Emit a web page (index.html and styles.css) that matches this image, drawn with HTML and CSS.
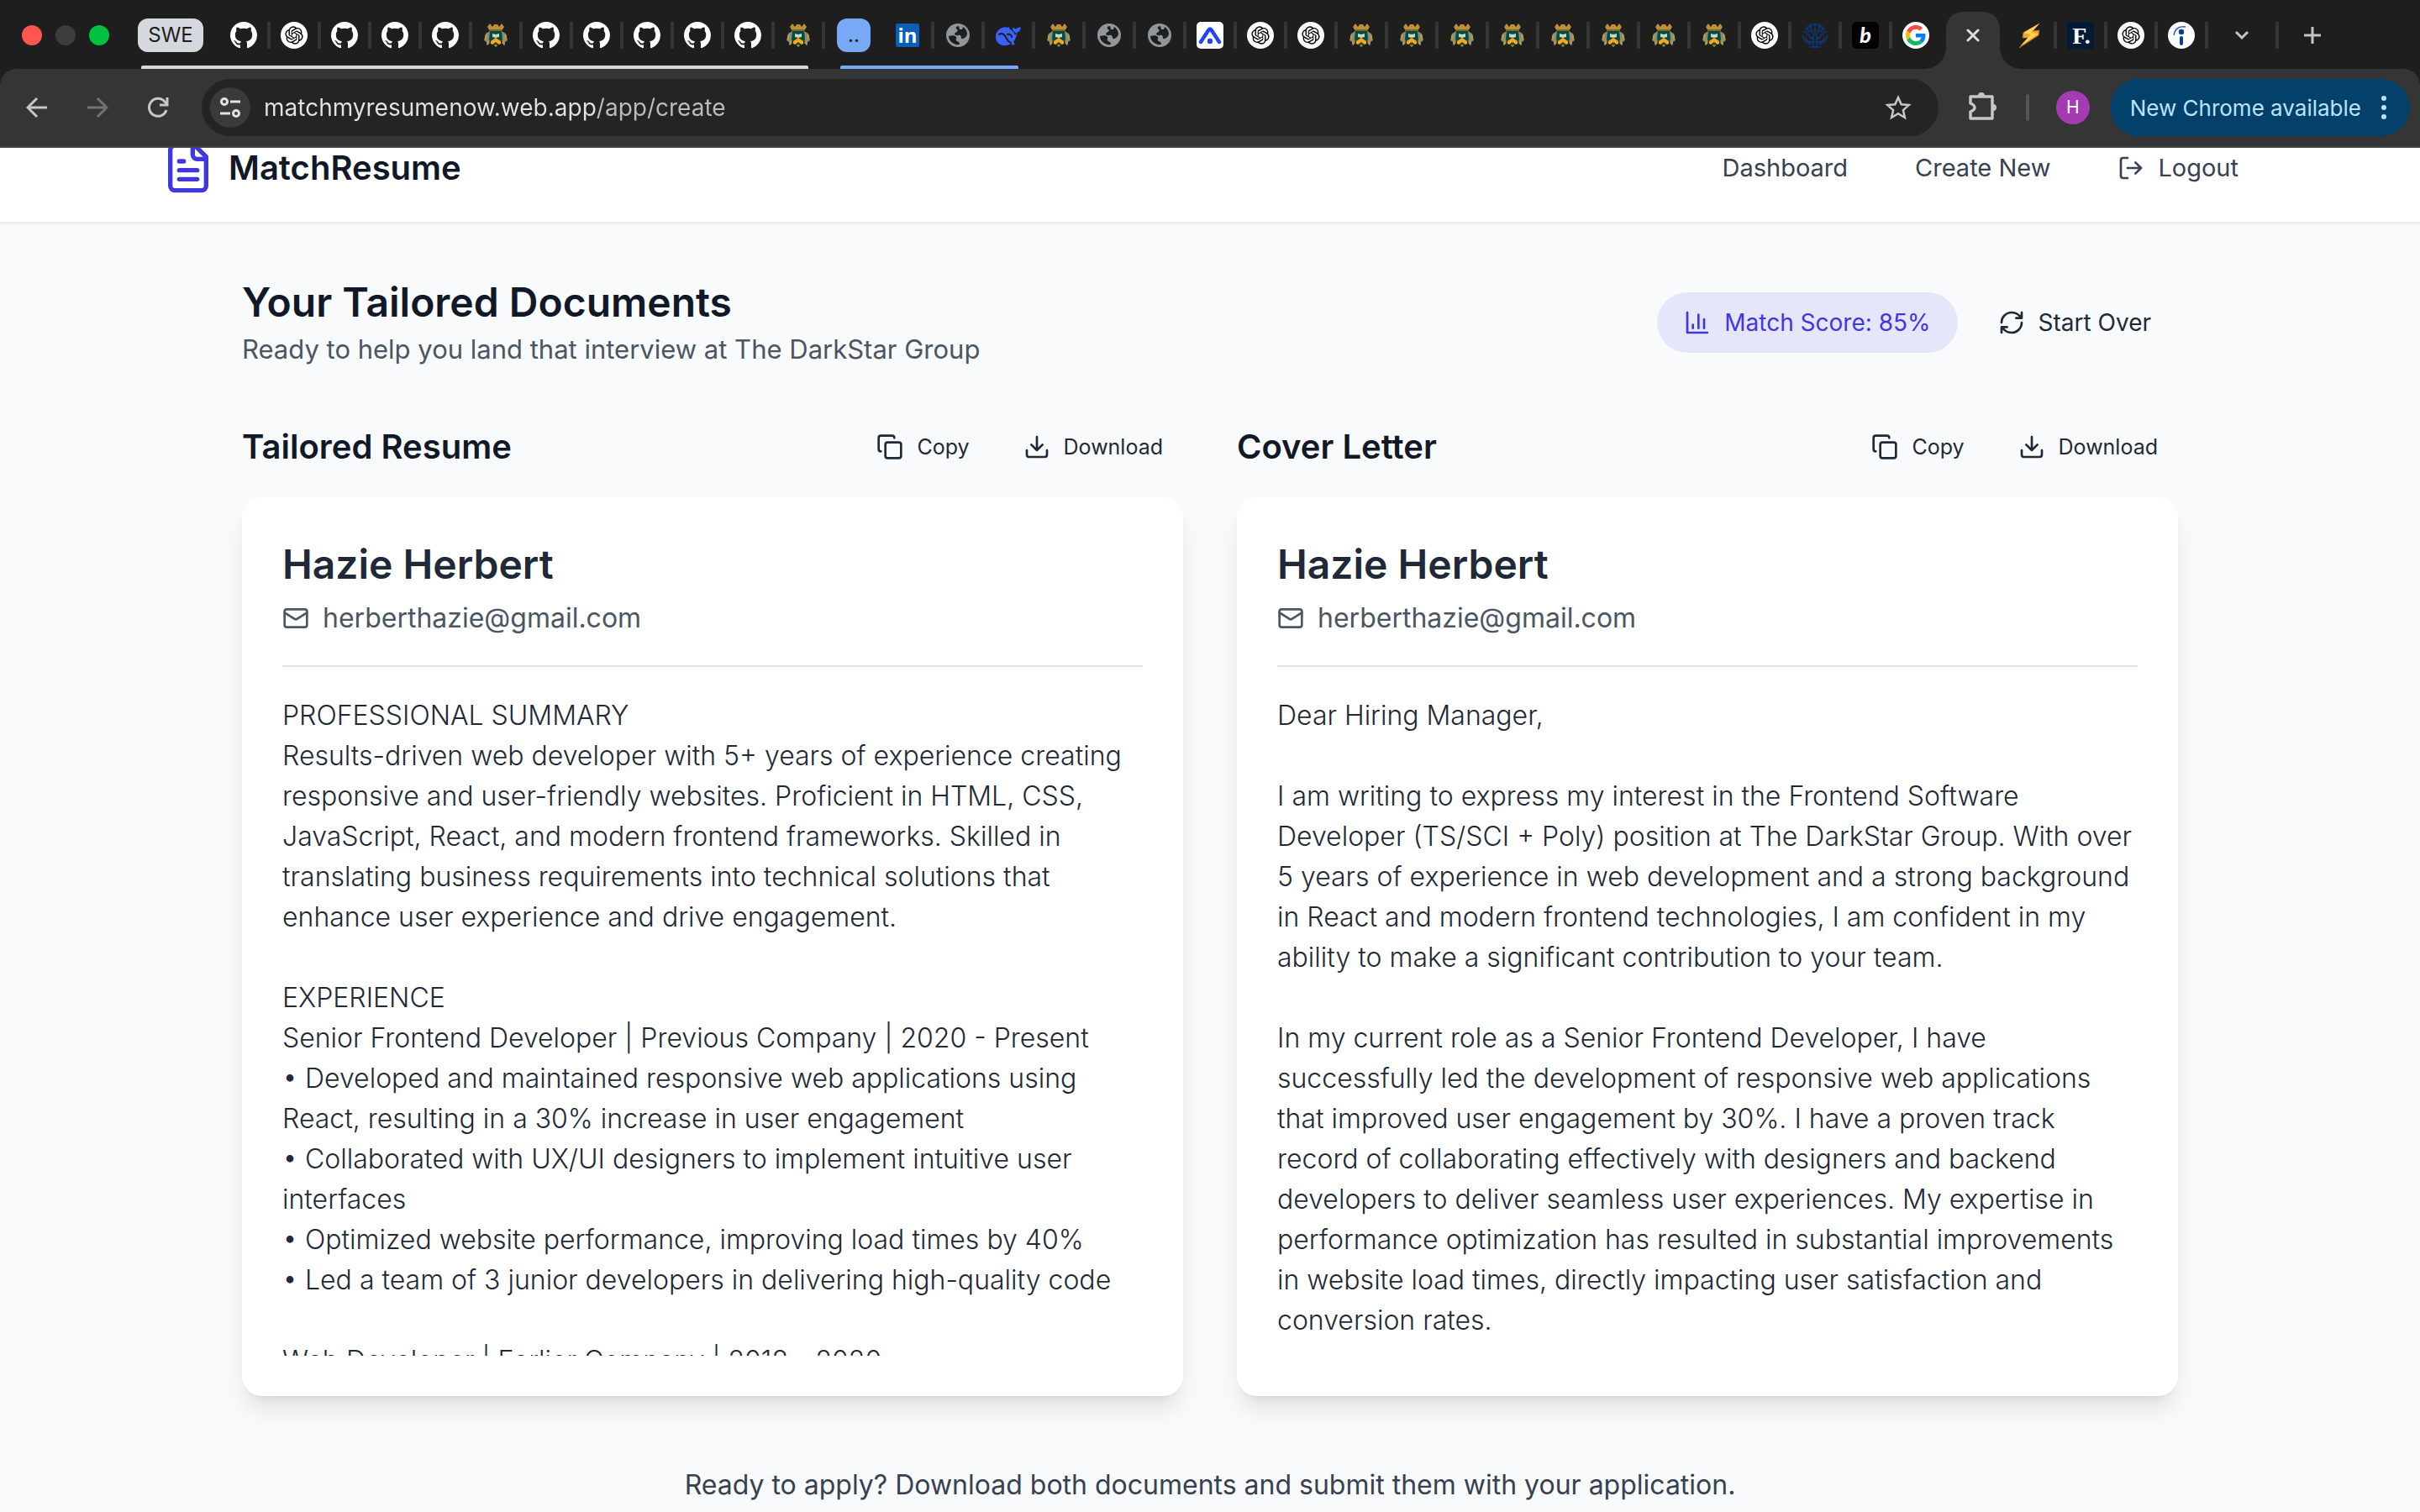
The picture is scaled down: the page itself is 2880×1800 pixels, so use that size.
FILE: index.html
```html
<!DOCTYPE html>
<html lang="en">
<head>
    <meta charset="UTF-8">
    <meta name="viewport" content="width=device-width, initial-scale=1.0">
    <title>MatchResume</title>
    <link rel="stylesheet" href="styles.css">
</head>
<body>
    <!-- Icon sprites -->
    <svg class="sprites" aria-hidden="true">
        <symbol id="github" viewBox="0 0 16 16">
            <path fill="#fff" d="M8 0C3.58 0 0 3.58 0 8c0 3.54 2.29 6.53 5.47 7.59.4.07.55-.17.55-.38 0-.19-.01-.82-.01-1.49-2.01.37-2.53-.49-2.69-.94-.09-.23-.48-.94-.82-1.13-.28-.15-.68-.52-.01-.53.63-.01 1.08.58 1.23.82.72 1.21 1.87.87 2.33.66.07-.52.28-.87.51-1.07-1.78-.2-3.64-.89-3.64-3.95 0-.87.31-1.59.82-2.15-.08-.2-.36-1.02.08-2.12 0 0 .67-.21 2.2.82.64-.18 1.32-.27 2-.27s1.36.09 2 .27c1.53-1.04 2.2-.82 2.2-.82.44 1.1.16 1.92.08 2.12.51.56.82 1.27.82 2.15 0 3.07-1.87 3.75-3.65 3.95.29.25.54.73.54 1.48 0 1.07-.01 1.93-.01 2.2 0 .21.15.46.55.38A8.01 8.01 0 0 0 16 8c0-4.42-3.58-8-8-8z"/>
        </symbol>
        <symbol id="openai" viewBox="0 0 36 36">
            <circle cx="18" cy="18" r="18" fill="#fff"/>
            <path fill="#000" transform="translate(6 6)" d="M22.2819 9.8211a5.9847 5.9847 0 0 0-.5157-4.9108 6.0462 6.0462 0 0 0-6.5098-2.9A6.0651 6.0651 0 0 0 4.9807 4.1818a5.9847 5.9847 0 0 0-3.9977 2.9 6.0462 6.0462 0 0 0 .7427 7.0966 5.98 5.98 0 0 0 .511 4.9107 6.051 6.051 0 0 0 6.5146 2.9001A5.9847 5.9847 0 0 0 13.2599 24a6.0557 6.0557 0 0 0 5.7718-4.2058 5.9894 5.9894 0 0 0 3.9977-2.9001 6.0557 6.0557 0 0 0-.7475-7.0729zm-9.022 12.6081a4.4755 4.4755 0 0 1-2.8764-1.0408l.1419-.0804 4.7783-2.7582a.7948.7948 0 0 0 .3927-.6813v-6.7369l2.02 1.1686a.071.071 0 0 1 .038.052v5.5826a4.504 4.504 0 0 1-4.4945 4.4944zm-9.6607-4.1254a4.4708 4.4708 0 0 1-.5346-3.0137l.142.0852 4.783 2.7582a.7712.7712 0 0 0 .7806 0l5.8428-3.3685v2.3324a.0804.0804 0 0 1-.0332.0615L9.74 19.9502a4.4992 4.4992 0 0 1-6.1408-1.6464zM2.3408 7.8956a4.485 4.485 0 0 1 2.3655-1.9728V11.6a.7664.7664 0 0 0 .3879.6765l5.8144 3.3543-2.0201 1.1685a.0757.0757 0 0 1-.071 0l-4.8303-2.7865A4.504 4.504 0 0 1 2.3408 7.872zm16.5963 3.8558L13.1038 8.364 15.1192 7.2a.0757.0757 0 0 1 .071 0l4.8303 2.7913a4.4944 4.4944 0 0 1-.6765 8.1042v-5.6772a.79.79 0 0 0-.407-.667zm2.0107-3.0231l-.142-.0852-4.7735-2.7818a.7759.7759 0 0 0-.7854 0L9.409 9.2297V6.8974a.0662.0662 0 0 1 .0284-.0615l4.8303-2.7866a4.4992 4.4992 0 0 1 6.6802 4.66zM8.3065 12.863l-2.02-1.1638a.0804.0804 0 0 1-.038-.0567V6.0742a4.4992 4.4992 0 0 1 7.3757-3.4537l-.142.0805L8.704 5.459a.7948.7948 0 0 0-.3927.6813zm1.0976-2.3654l2.602-1.4998 2.6069 1.4998v2.9994l-2.5974 1.4997-2.6067-1.4997Z"/>
        </symbol>
        <symbol id="crest" viewBox="0 0 32 32">
            <path fill="#bf8f32" d="M9 2l3 4 2-3h4l2 3 3-4 3 4-3 5H9L6 6z"/>
            <path fill="#6f6a3c" d="M8 9h16l-1 3H9z"/>
            <path fill="#7f8e80" d="M4 14l5-3 2 5-3 9-3 3v-4l-3-2zM28 14l-5-3-2 5 3 9 3 3v-4l3-2z"/>
            <path fill="#c9952b" d="M3 16l3-1-1 6-2 1zM29 16l-3-1 1 6 2 1zM6 22l3 3-3 3zM26 22l-3 3 3 3z"/>
            <path fill="#0b4a38" d="M9 11h14l1 10-3 5-5 4-5-4-3-5z"/>
            <path fill="#c8d6cc" d="M12 14l4 1 4-1v4l-4 1-4-1z"/>
            <path fill="#ffa41f" d="M10 23l6-4 6 4v3l-2 1-4-3-4 3-2-1z"/>
            <path fill="#b98a2e" d="M14 28l2 2 2-2-2-1z"/>
        </symbol>
        <symbol id="linkedin" viewBox="0 0 32 32">
            <rect x="2" y="2" width="28" height="28" rx="2" fill="#0a5fb8"/>
            <text x="16" y="25" text-anchor="middle" class="mark-in">in</text>
        </symbol>
        <symbol id="globe" viewBox="0 0 32 32">
            <circle cx="16" cy="16" r="14" fill="#8f969c"/>
            <path fill="#1e1e1e" d="M17 5c-4 0-4 3-2 4s0 3-2 4 0 4 3 3 4 1 4 3 3 1 4 0 3-2 3-5A11 11 0 0 0 22 6l-1 3h-3zM5 17c4-1 8-1 9 1s-1 2 0 4 4 1 4 5C11 28 5 23 5 17z"/>
        </symbol>
        <symbol id="whale" viewBox="0 0 32 32">
            <path fill="#3b62f6" d="M9 7c2-1 4-1 6 0l2-1 0 2c4 2 6 5 7 8 1-1 1-2 1-3-3-1-4-3-4-6 2 0 3 1 4 2 1-2 4-3 6-2-1 3-2 5-5 6 0 5-2 8-4 11l2 3c-2 1-4 0-5-1C11 31 1 27 1 18 1 12 5 8 9 7z"/>
            <path fill="none" stroke="#1e1e1e" stroke-width="2" stroke-linecap="round" d="M5 15c4-3 7 1 9 5s4 4 5 5M15 15c3-1 5 1 5 3"/>
        </symbol>
        <symbol id="arch" viewBox="0 0 32 32">
            <rect width="32" height="32" rx="5" fill="#fff"/>
            <path d="M5 24L14.500 9.500q1.500-2 3 0L27 24" fill="none" stroke="#2543f5" stroke-width="4.500" stroke-linecap="round"/>
            <circle cx="16" cy="23" r="3.200" fill="#2543f5"/>
        </symbol>
        <symbol id="tree" viewBox="0 0 32 32">
            <g fill="none" stroke="#0e3670" stroke-width="1.800" stroke-linecap="round">
                <path d="M14 29V15M18 29V15M10 30h12M16 15V3M14 20q-5 0-5-5M18 20q5 0 5-5M14 24q-8 1-9-5M18 24q8 1 9-5"/>
                <path d="M12 4q-3 1-1 4t2 5M20 4q3 1 1 4t-2 5M7 7q0 4 3 5M25 7q0 4-3 5M3 12q3-1 4 3M29 12q-3-1-4 3M2 17q1 8 8 9M30 17q-1 8-8 9M5 9Q9 2 16 3q7-1 11 6"/>
            </g>
        </symbol>
        <symbol id="bold-b" viewBox="0 0 32 32">
            <rect width="32" height="32" rx="6" fill="#000"/>
            <text x="16" y="25" text-anchor="middle" class="mark-b">b</text>
        </symbol>
        <symbol id="google" viewBox="0 0 32 32">
            <circle cx="16" cy="16" r="16" fill="#fff"/>
            <g transform="translate(4 4) scale(.5)">
                <path fill="#ff4641" d="M24 9.500c3.540 0 6.710 1.220 9.210 3.600l6.850-6.850C35.900 2.380 30.470 0 24 0 14.620 0 6.510 5.380 2.560 13.220l7.980 6.190C12.430 13.720 17.740 9.500 24 9.500z"/>
                <path fill="#0b7bff" d="M46.980 24.550c0-1.570-.15-3.090-.38-4.550H24v9.020h12.940c-.58 2.960-2.260 5.480-4.780 7.180l7.730 6c4.510-4.180 7.090-10.360 7.090-17.650z"/>
                <path fill="#fbbc05" d="M10.530 28.590c-.48-1.450-.76-2.990-.76-4.590s.27-3.140.76-4.590l-7.980-6.190C.92 16.460 0 20.120 0 24c0 3.880.92 7.540 2.560 10.780l7.970-6.190z"/>
                <path fill="#0ebc5f" d="M24 48c6.480 0 11.930-2.130 15.890-5.810l-7.730-6c-2.150 1.450-4.920 2.300-8.160 2.300-6.260 0-11.570-4.220-13.470-9.910l-7.980 6.190C6.510 42.620 14.620 48 24 48z"/>
            </g>
        </symbol>
        <symbol id="bolt" viewBox="0 0 32 32">
            <path fill="#f2a33c" stroke="#b8702a" stroke-width=".8" d="M27 2L8 13l-1 6 7 0L3 31l23-15 1-6-8 1z"/>
            <path fill="#ffd54d" d="M27 2L8 13l9 2L4 29l22-15-9-1z"/>
        </symbol>
        <symbol id="serif-f" viewBox="0 0 32 32">
            <rect width="32" height="32" fill="#021a36"/>
            <text x="17" y="26" text-anchor="middle" class="mark-f">F.</text>
        </symbol>
        <symbol id="indeed" viewBox="0 0 32 32">
            <circle cx="16" cy="16" r="16" fill="#fff"/>
            <circle cx="16" cy="12" r="3.200" fill="#0a3d99"/>
            <rect x="14" y="17" width="4" height="11" rx="2" fill="#0a3d99"/>
            <path d="M7 16Q9 4 21 6" fill="none" stroke="#2f62c0" stroke-width="1.600"/>
        </symbol>
        <symbol id="copy" viewBox="0 0 24 24">
            <rect x="8" y="8" width="14" height="14" rx="2"/>
            <path d="M4 16c-1.100 0-2-.900-2-2V4c0-1.100.900-2 2-2h10c1.100 0 2 .900 2 2"/>
        </symbol>
        <symbol id="download" viewBox="0 0 24 24">
            <path d="M21 15v4a2 2 0 0 1-2 2H5a2 2 0 0 1-2-2v-4M7 10l5 5 5-5M12 15V3"/>
        </symbol>
        <symbol id="mail" viewBox="0 0 24 24">
            <rect x="2" y="4" width="20" height="16" rx="2"/>
            <path d="m22 7-8.970 5.700a1.940 1.940 0 0 1-2.060 0L2 7"/>
        </symbol>
    </svg>

    <div class="browser">
        <div class="tab-strip">
            <div class="lights">
                <span class="light red"></span>
                <span class="light grey"></span>
                <span class="light green"></span>
            </div>
            <div class="tab-group group-grey">
                <button class="group-label">SWE</button>
                <button class="tab" aria-label="GitHub"><svg class="favicon"><use href="#github"/></svg></button>
                <button class="tab" aria-label="ChatGPT"><svg class="favicon"><use href="#openai"/></svg></button>
                <button class="tab" aria-label="GitHub"><svg class="favicon"><use href="#github"/></svg></button>
                <button class="tab" aria-label="GitHub"><svg class="favicon"><use href="#github"/></svg></button>
                <button class="tab" aria-label="GitHub"><svg class="favicon"><use href="#github"/></svg></button>
                <button class="tab" aria-label="University"><svg class="favicon"><use href="#crest"/></svg></button>
                <button class="tab" aria-label="GitHub"><svg class="favicon"><use href="#github"/></svg></button>
                <button class="tab" aria-label="GitHub"><svg class="favicon"><use href="#github"/></svg></button>
                <button class="tab" aria-label="GitHub"><svg class="favicon"><use href="#github"/></svg></button>
                <button class="tab" aria-label="GitHub"><svg class="favicon"><use href="#github"/></svg></button>
                <button class="tab" aria-label="GitHub"><svg class="favicon"><use href="#github"/></svg></button>
                <button class="tab" aria-label="University"><svg class="favicon"><use href="#crest"/></svg></button>
            </div>
            <div class="tab-group group-blue">
                <button class="group-label">..</button>
                <button class="tab" aria-label="LinkedIn"><svg class="favicon"><use href="#linkedin"/></svg></button>
                <button class="tab" aria-label="Site"><svg class="favicon"><use href="#globe"/></svg></button>
                <button class="tab" aria-label="DeepSeek"><svg class="favicon"><use href="#whale"/></svg></button>
            </div>
            <button class="tab" aria-label="University"><svg class="favicon"><use href="#crest"/></svg></button>
            <button class="tab" aria-label="Site"><svg class="favicon"><use href="#globe"/></svg></button>
            <button class="tab" aria-label="Site"><svg class="favicon"><use href="#globe"/></svg></button>
            <button class="tab" aria-label="App"><svg class="favicon"><use href="#arch"/></svg></button>
            <button class="tab" aria-label="ChatGPT"><svg class="favicon"><use href="#openai"/></svg></button>
            <button class="tab" aria-label="ChatGPT"><svg class="favicon"><use href="#openai"/></svg></button>
            <button class="tab" aria-label="University"><svg class="favicon"><use href="#crest"/></svg></button>
            <button class="tab" aria-label="University"><svg class="favicon"><use href="#crest"/></svg></button>
            <button class="tab" aria-label="University"><svg class="favicon"><use href="#crest"/></svg></button>
            <button class="tab" aria-label="University"><svg class="favicon"><use href="#crest"/></svg></button>
            <button class="tab" aria-label="University"><svg class="favicon"><use href="#crest"/></svg></button>
            <button class="tab" aria-label="University"><svg class="favicon"><use href="#crest"/></svg></button>
            <button class="tab" aria-label="University"><svg class="favicon"><use href="#crest"/></svg></button>
            <button class="tab" aria-label="University"><svg class="favicon"><use href="#crest"/></svg></button>
            <button class="tab" aria-label="ChatGPT"><svg class="favicon"><use href="#openai"/></svg></button>
            <button class="tab" aria-label="Tree"><svg class="favicon"><use href="#tree"/></svg></button>
            <button class="tab" aria-label="Blog"><svg class="favicon"><use href="#bold-b"/></svg></button>
            <button class="tab no-line" aria-label="Google"><svg class="favicon"><use href="#google"/></svg></button>
            <button class="active-tab" aria-label="Close tab">
                <svg width="16" height="16" viewBox="0 0 16 16" stroke="#dcdcdc" stroke-width="3" stroke-linecap="round"><path d="M2 2l12 12M14 2L2 14"/></svg>
            </button>
            <button class="tab" aria-label="Bolt"><svg class="favicon"><use href="#bolt"/></svg></button>
            <button class="tab" aria-label="Forage"><svg class="favicon"><use href="#serif-f"/></svg></button>
            <button class="tab" aria-label="ChatGPT"><svg class="favicon"><use href="#openai"/></svg></button>
            <button class="tab" aria-label="Indeed"><svg class="favicon"><use href="#indeed"/></svg></button>
            <button class="tab-tool search-tabs" aria-label="Search tabs">
                <svg width="18" height="12" viewBox="0 0 18 12" fill="none" stroke="#c4c4c4" stroke-width="3"><path d="M2 2l7 7 7-7"/></svg>
            </button>
            <button class="tab-tool new-tab" aria-label="New tab">
                <svg width="20" height="20" viewBox="0 0 20 20" stroke="#c4c4c4" stroke-width="3"><path d="M10 0v20M0 10h20"/></svg>
            </button>
        </div>

        <div class="toolbar">
            <button class="nav-btn" aria-label="Back">
                <svg width="26" height="26" viewBox="0 0 26 26" fill="none" stroke="#c7c7c7" stroke-width="3"><path d="M25 13H3M13 2L2 13l11 11"/></svg>
            </button>
            <button class="nav-btn" aria-label="Forward">
                <svg width="26" height="26" viewBox="0 0 26 26" fill="none" stroke="#737373" stroke-width="3"><path d="M1 13h22M13 2l11 11-11 11"/></svg>
            </button>
            <button class="nav-btn" aria-label="Reload">
                <svg width="26" height="26" viewBox="0 0 26 26" fill="none" stroke="#c7c7c7" stroke-width="3"><path d="M23 16A10.500 10.500 0 1 1 21 6l3 3"/><path d="M24 1v9h-9"/></svg>
            </button>
            <div class="omnibox">
                <button class="site-info" aria-label="Site information">
                    <svg width="26" height="26" viewBox="0 0 26 26" fill="none" stroke="#e3e3e3" stroke-width="3"><circle cx="6" cy="6" r="3.500"/><path d="M13 6h12M1 20h12"/><circle cx="20" cy="20" r="3.500"/></svg>
                </button>
                <input class="url" type="text" aria-label="Address" value="matchmyresumenow.web.app/app/create">
                <button class="star" aria-label="Bookmark">
                    <svg width="32" height="32" viewBox="0 0 32 32" fill="none" stroke="#c7c7c7" stroke-width="2.500"><path d="M16 4l3.700 8.300 9 .800-6.800 6 2 8.900L16 23.300 8.100 28l2-8.900-6.800-6 9-.800z"/></svg>
                </button>
            </div>
            <button class="puzzle" aria-label="Extensions">
                <svg width="34" height="36" viewBox="0 0 34 36" fill="none" stroke="#c7c7c7" stroke-width="3.500" stroke-linejoin="round"><path d="M2 7h26v26H2v-8q5-2 5-5t-5-5z"/><path fill="#c7c7c7" stroke="none" d="M11 6a4 4 0 0 1 8 0zM29 16a4 4 0 0 1 0 8z"/></svg>
            </button>
            <span class="bar-line"></span>
            <button class="avatar">H</button>
            <button class="update">
                New Chrome available
                <svg width="6" height="28" viewBox="0 0 6 28" fill="#b9e4fb"><circle cx="3" cy="3" r="3"/><circle cx="3" cy="14" r="3"/><circle cx="3" cy="25" r="3"/></svg>
            </button>
        </div>
    </div>

    <div class="page">
        <header class="site-header">
            <a class="brand" href="#">
                <svg class="brand-icon" viewBox="0 0 24 24"><path d="M15 2H6a2 2 0 0 0-2 2v16a2 2 0 0 0 2 2h12a2 2 0 0 0 2-2V7z"/><path d="M14 2v4a2 2 0 0 0 2 2h4M10 9H8M16 13H8M16 17H8"/></svg>
                MatchResume
            </a>
            <nav class="site-nav">
                <a href="#">Dashboard</a>
                <a href="#">Create New</a>
                <a href="#">
                    <svg class="icon" viewBox="0 0 24 24"><path d="M9 21H5a2 2 0 0 1-2-2V5a2 2 0 0 1 2-2h4M16 17l5-5-5-5M21 12H9"/></svg>
                    Logout
                </a>
            </nav>
        </header>

        <main class="content">
            <div class="title-row">
                <div>
                    <h1>Your Tailored Documents</h1>
                    <p class="subtitle">Ready to help you land that interview at The DarkStar Group</p>
                </div>
                <div class="title-actions">
                    <span class="score">
                        <svg class="icon" viewBox="0 0 24 24"><path d="M3 3v18h18M18 17V9M13 17V5M8 17v-3"/></svg>
                        Match Score: 85%
                    </span>
                    <button class="btn">
                        <svg class="icon" viewBox="0 0 24 24"><path d="M3 12a9 9 0 0 1 9-9 9.750 9.750 0 0 1 6.740 2.740L21 8M21 3v5h-5M21 12a9 9 0 0 1-9 9 9.750 9.750 0 0 1-6.740-2.740L3 16M8 16H3v5"/></svg>
                        Start Over
                    </button>
                </div>
            </div>

            <div class="documents">
                <section class="document">
                    <div class="document-head">
                        <h2>Tailored Resume</h2>
                        <div class="document-actions">
                            <button class="btn btn-small"><svg class="icon"><use href="#copy"/></svg>Copy</button>
                            <button class="btn btn-small"><svg class="icon"><use href="#download"/></svg>Download</button>
                        </div>
                    </div>
                    <article class="card">
                        <h3>Hazie Herbert</h3>
                        <p class="email"><svg class="icon"><use href="#mail"/></svg>herberthazie@gmail.com</p>
                        <div class="text">PROFESSIONAL SUMMARY
Results-driven web developer with 5+ years of experience creating
responsive and user-friendly websites. Proficient in HTML, CSS,
JavaScript, React, and modern frontend frameworks. Skilled in
translating business requirements into technical solutions that
enhance user experience and drive engagement.

EXPERIENCE
Senior Frontend Developer | Previous Company | 2020 - Present
• Developed and maintained responsive web applications using
React, resulting in a 30% increase in user engagement
• Collaborated with UX/UI designers to implement intuitive user
interfaces
• Optimized website performance, improving load times by 40%
• Led a team of 3 junior developers in delivering high-quality code

Web Developer | Earlier Company | 2018 - 2020</div>
                    </article>
                </section>

                <section class="document">
                    <div class="document-head">
                        <h2>Cover Letter</h2>
                        <div class="document-actions">
                            <button class="btn btn-small"><svg class="icon"><use href="#copy"/></svg>Copy</button>
                            <button class="btn btn-small"><svg class="icon"><use href="#download"/></svg>Download</button>
                        </div>
                    </div>
                    <article class="card">
                        <h3>Hazie Herbert</h3>
                        <p class="email"><svg class="icon"><use href="#mail"/></svg>herberthazie@gmail.com</p>
                        <div class="text">Dear Hiring Manager,

I am writing to express my interest in the Frontend Software
Developer (TS/SCI + Poly) position at The DarkStar Group. With over
5 years of experience in web development and a strong background
in React and modern frontend technologies, I am confident in my
ability to make a significant contribution to your team.

In my current role as a Senior Frontend Developer, I have
successfully led the development of responsive web applications
that improved user engagement by 30%. I have a proven track
record of collaborating effectively with designers and backend
developers to deliver seamless user experiences. My expertise in
performance optimization has resulted in substantial improvements
in website load times, directly impacting user satisfaction and
conversion rates.</div>
                    </article>
                </section>
            </div>

            <p class="closing">Ready to apply? Download both documents and submit them with your application.</p>
        </main>
    </div>
</body>
</html>
```
FILE: styles.css
```css
* {
    box-sizing: border-box;
}

body {
    margin: 0;
    height: 100vh;
    display: flex;
    flex-direction: column;
    overflow: hidden;
    background: #f8fafc;
    color: #1f2937;
    font-family: Inter, "Open Sans", sans-serif;
    font-size: 32px;
    line-height: 48px;
}

h1, h2, h3, p {
    margin: 0;
}

a {
    color: inherit;
    text-decoration: none;
}

button {
    border: none;
    padding: 0;
    background: none;
    color: inherit;
    font-family: inherit;
    cursor: pointer;
}

.sprites {
    display: none;
}

/* Browser window */
.browser {
    flex: none;
    background: #1e1e1e;
}

.tab-strip {
    display: flex;
    align-items: center;
    height: 82px;
    padding: 2px 0 0 26px;
}

.lights {
    display: flex;
    gap: 16px;
    margin-right: 34px;
}

.light {
    width: 24px;
    height: 24px;
    border-radius: 50%;
}

.red { background: #ff5650; }
.grey { background: #3d3d3d; }
.green { background: #00c140; }

.tab-group {
    position: relative;
    display: flex;
    align-items: center;
    height: 80px;
}

.tab-group::after {
    content: "";
    position: absolute;
    left: 4px;
    right: 20px;
    bottom: 0;
    height: 4px;
    border-radius: 2px 2px 0 0;
}

.group-label {
    height: 40px;
    border-radius: 12px;
    color: #1e1e1e;
    font-size: 24px;
    line-height: 40px;
}

.group-grey .group-label {
    width: 78px;
    margin-right: 20px;
    background: #d5d8de;
}

.group-grey::after { background: #d3d8dc; }

.group-blue {
    margin-left: 14px;
}

.group-blue .group-label {
    width: 40px;
    margin-right: 16px;
    background: #78a9f6;
}

.group-blue::after { background: #78a9f6; }

.tab {
    display: flex;
    align-items: center;
    height: 32px;
    padding: 0 12px;
    border-right: 4px solid #353535;
}

.tab.no-line {
    border-right: none;
}

.favicon {
    width: 32px;
    height: 32px;
}

.mark-in {
    fill: #fff;
    font: 700 24px "Open Sans", sans-serif;
}

.mark-b {
    fill: #fff;
    font: italic 900 25px Lato, sans-serif;
}

.mark-f {
    fill: #fff;
    font: 700 28px "Liberation Serif", serif;
}

.active-tab {
    position: relative;
    display: flex;
    align-items: center;
    justify-content: center;
    align-self: flex-end;
    width: 64px;
    height: 68px;
    margin: 0 8px;
    padding-bottom: 12px;
    border-radius: 20px 20px 0 0;
    background: #353535;
}

.active-tab::before,
.active-tab::after {
    content: "";
    position: absolute;
    bottom: 0;
    width: 24px;
    height: 24px;
}

.active-tab::before {
    right: 100%;
    background: radial-gradient(circle at 0 0, transparent 23px, #353535 24px);
}

.active-tab::after {
    left: 100%;
    background: radial-gradient(circle at 100% 0, transparent 23px, #353535 24px);
}

.tab-tool {
    display: flex;
    align-items: center;
    justify-content: center;
    width: 80px;
    height: 32px;
}

.search-tabs {
    width: 84px;
    border-right: 4px solid #353535;
}

.toolbar {
    display: flex;
    align-items: center;
    height: 94px;
    padding: 0 12px 0 8px;
    border-bottom: 2px solid #444;
    border-radius: 20px 20px 0 0;
    background: #353535;
}

.nav-btn {
    display: flex;
    justify-content: center;
    width: 72px;
}

.omnibox {
    display: flex;
    align-items: center;
    flex: 1;
    height: 68px;
    margin-left: 16px;
    padding: 0 32px 0 10px;
    border-radius: 34px;
    background: #242424;
}

.site-info {
    display: flex;
    align-items: center;
    justify-content: center;
    width: 48px;
    height: 48px;
    border-radius: 50%;
    background: #3a3a3a;
}

.url {
    flex: 1;
    margin-left: 16px;
    padding: 0;
    border: none;
    outline: none;
    /* host is brighter than the path */
    background: linear-gradient(90deg, #e3e3e3 395px, #bdbdbd 395px);
    -webkit-background-clip: text;
    background-clip: text;
    -webkit-text-fill-color: transparent;
    color: #e3e3e3;
    font-family: inherit;
    font-size: 28px;
    line-height: 40px;
}

.star,
.puzzle {
    display: flex;
}

.puzzle {
    margin: 0 34px 4px 36px;
}

.bar-line {
    width: 4px;
    height: 32px;
    border-radius: 2px;
    background: #555;
}

.avatar {
    width: 40px;
    height: 40px;
    margin: 0 24px 0 32px;
    border-radius: 50%;
    background: #a53bb2;
    color: #fff;
    font-size: 21px;
    line-height: 40px;
}

.update {
    display: flex;
    align-items: center;
    gap: 24px;
    height: 68px;
    padding: 0 28px 0 24px;
    border-radius: 34px;
    background: #03406a;
    color: #b9e4fb;
    font-size: 26px;
}

/* Web page */
.page {
    flex: 1;
    min-height: 0;
    overflow: hidden;
}

.icon {
    flex: none;
    width: 32px;
    height: 32px;
    fill: none;
    stroke: currentColor;
    stroke-width: 2;
    stroke-linecap: round;
    stroke-linejoin: round;
}

.site-header {
    display: flex;
    align-items: center;
    justify-content: space-between;
    height: 128px;
    /* page is scrolled down a little */
    margin-top: -40px;
    padding: 0 192px;
    background: #fff;
    box-shadow: 0 2px 4px rgba(0, 0, 0, 0.08);
}

.brand {
    display: flex;
    align-items: center;
    gap: 16px;
    color: #111827;
    font-size: 40px;
    font-weight: 600;
}

.brand-icon {
    width: 64px;
    height: 64px;
    fill: none;
    stroke: #4038df;
    stroke-width: 2;
    stroke-linecap: round;
    stroke-linejoin: round;
}

.site-nav {
    display: flex;
    gap: 32px;
    color: #374151;
    font-size: 29px;
}

.site-nav a {
    display: flex;
    align-items: center;
    gap: 16px;
    padding: 0 24px;
}

.content {
    max-width: 2432px;
    margin: 0 auto;
    padding: 64px;
}

.title-row {
    display: flex;
    align-items: center;
    justify-content: space-between;
    margin-bottom: 64px;
}

h1 {
    color: #111827;
    font-size: 48px;
    font-weight: 600;
    line-height: 64px;
}

.subtitle {
    color: #4b5563;
    font-size: 31px;
}

.title-actions {
    display: flex;
    gap: 16px;
}

.score,
.btn {
    display: flex;
    align-items: center;
    gap: 16px;
    height: 72px;
    padding: 0 32px;
    font-size: 28px;
}

.score {
    border-radius: 36px;
    background: #e5e6f9;
    color: #4038df;
}

.documents {
    display: grid;
    grid-template-columns: 1fr 1fr;
    gap: 64px;
}

.document {
    display: flex;
    flex-direction: column;
    min-width: 0;
}

.document-head {
    display: flex;
    align-items: center;
    justify-content: space-between;
    margin-bottom: 32px;
}

h2 {
    color: #111827;
    font-size: 40px;
    font-weight: 600;
    line-height: 56px;
}

.document-actions {
    display: flex;
    gap: 16px;
}

.btn-small {
    height: 56px;
    padding: 0 24px;
    font-size: 25px;
}

.card {
    flex: 1;
    padding: 48px;
    border-radius: 24px;
    background: #fff;
    box-shadow: 0 20px 30px -6px rgba(0, 0, 0, 0.1), 0 8px 12px -8px rgba(0, 0, 0, 0.1);
}

h3 {
    font-size: 48px;
    font-weight: 600;
    line-height: 64px;
}

.email {
    display: flex;
    align-items: center;
    gap: 16px;
    margin-top: 8px;
    padding-bottom: 32px;
    border-bottom: 2px solid #e2e4e9;
    color: #4b5563;
}

.text {
    max-height: 786px;
    margin-top: 34px;
    overflow-x: visible;
    overflow-y: clip;
    font-weight: 350;
    white-space: pre;
}

.closing {
    margin-top: 82px;
    color: #374151;
    text-align: center;
}
```
